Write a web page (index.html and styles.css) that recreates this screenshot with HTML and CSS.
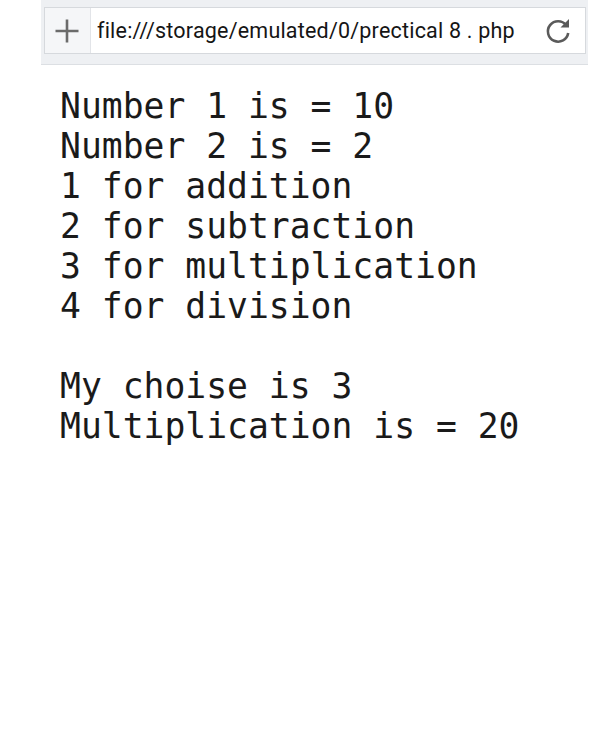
FILE: index.html
```html
<!DOCTYPE html>
<html>
<head>
<meta charset="utf-8">
<link rel="stylesheet" href="styles.css">
</head>
<body>
<div class="toolbar">
  <div class="urlbox">
    <div class="plus">
      <svg width="26" height="26" viewBox="0 0 26 26"><path d="M13 1.5V24.5M1.5 13H24.5" stroke="#6b6b6b" stroke-width="2.6" fill="none"/></svg>
    </div>
    <div class="url">file:///storage/emulated/0/prectical 8 . php</div>
    <div class="reload">
      <svg width="28" height="28" viewBox="0 0 28 28"><path d="M22.2 8.2A10.2 10.2 0 1 0 24.2 16" stroke="#5a5a5a" stroke-width="2.6" fill="none"/><path d="M16.5 10.5H25V2z" fill="#5a5a5a"/></svg>
    </div>
  </div>
</div>
<div class="output">Number 1 is = 10<br>Number 2 is = 2<br>1 for addition<br>2 for subtraction<br>3 for multiplication<br>4 for division<br><br>My choise is 3<br>Multiplication is = 20</div>
</body>
</html>
```
FILE: styles.css
```css
html, body {
  margin: 0;
  padding: 0;
  background: #fff;
}
.toolbar {
  margin-left: 41px;
  width: 547px;
  height: 65px;
  background: #eef0f3;
  border-bottom: 1px solid #dcdfe3;
  padding-top: 7px;
  box-sizing: border-box;
}
.urlbox {
  margin-left: 3px;
  width: 542px;
  height: 47px;
  background: #fff;
  border: 1px solid #d6d9dd;
  box-sizing: border-box;
  display: flex;
  align-items: center;
}
.plus {
  width: 46px;
  height: 100%;
  background: #f5f6f8;
  border-right: 1px solid #e2e4e8;
  box-sizing: border-box;
  display: flex;
  align-items: center;
  justify-content: center;
}
.plus svg { display: block; margin-left: -2px; }
.url {
  flex: 1;
  padding-left: 6px;
  font-family: Roboto, "Liberation Sans", sans-serif;
  font-size: 21.5px;
  color: #151515;
  white-space: nowrap;
  letter-spacing: 0.2px;
}
.reload {
  width: 52px;
  display: flex;
  align-items: center;
  justify-content: center;
}
.reload svg { display: block; margin-left: -2px; }
.output {
  padding: 21px 0 0 60px;
  font-family: "DejaVu Sans Mono", monospace;
  font-size: 34.7px;
  line-height: 40px;
  color: #1a1a1a;
  white-space: pre;
}
```
